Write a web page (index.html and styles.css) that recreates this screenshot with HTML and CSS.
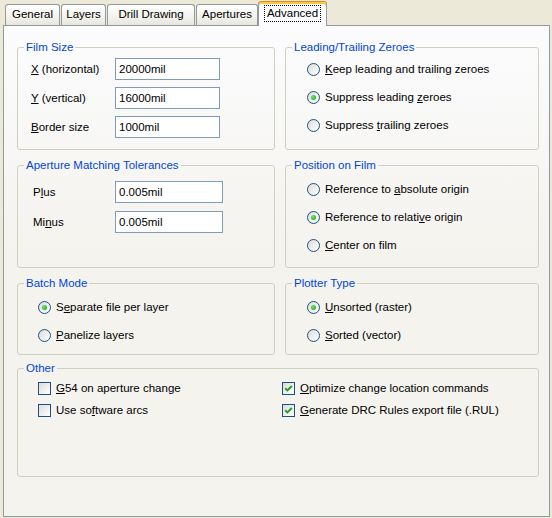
FILE: index.html
```html
<!DOCTYPE html>
<html>
<head>
<meta charset="utf-8">
<title>Advanced</title>
<link rel="stylesheet" href="styles.css">
</head>
<body>
<div class="tabs">
  <div class="tab t-general">General</div>
  <div class="tab t-layers">Layers</div>
  <div class="tab t-drill">Drill Drawing</div>
  <div class="tab t-apert">Apertures</div>
  <div class="tab active t-adv"><span class="focus">Advanced</span></div>
</div>
<div class="panel">
  <fieldset class="group g-r1">
    <legend>Film Size</legend>
    <div class="fields film">
      <label><u>X</u> (horizontal)</label><input class="edit w105" type="text" value="20000mil" readonly>
      <label><u>Y</u> (vertical)</label><input class="edit w105" type="text" value="16000mil" readonly>
      <label><u>B</u>order size</label><input class="edit w105" type="text" value="1000mil" readonly>
    </div>
  </fieldset>
  <fieldset class="group g-r1">
    <legend>Leading/Trailing Zeroes</legend>
    <div class="opts right lead">
      <div class="opt"><span class="radio"></span><span><u>K</u>eep leading and trailing zeroes</span></div>
      <div class="opt"><span class="radio"><span class="dot"></span></span><span>Suppress leading <u>z</u>eroes</span></div>
      <div class="opt"><span class="radio"></span><span>Suppress <u>t</u>railing zeroes</span></div>
    </div>
  </fieldset>
  <fieldset class="group g-r2">
    <legend>Aperture Matching Tolerances</legend>
    <div class="fields aperture">
      <label>P<u>l</u>us</label><input class="edit w108" type="text" value="0.005mil" readonly>
      <label>Mi<u>n</u>us</label><input class="edit w108" type="text" value="0.005mil" readonly>
    </div>
  </fieldset>
  <fieldset class="group g-r2">
    <legend>Position on Film</legend>
    <div class="opts right pos">
      <div class="opt"><span class="radio"></span><span>Reference to <u>a</u>bsolute origin</span></div>
      <div class="opt"><span class="radio"><span class="dot"></span></span><span>Reference to relati<u>v</u>e origin</span></div>
      <div class="opt"><span class="radio"></span><span><u>C</u>enter on film</span></div>
    </div>
  </fieldset>
  <fieldset class="group g-r3">
    <legend>Batch Mode</legend>
    <div class="opts left small">
      <div class="opt"><span class="radio"><span class="dot"></span></span><span>S<u>e</u>parate file per layer</span></div>
      <div class="opt"><span class="radio"></span><span><u>P</u>anelize layers</span></div>
    </div>
  </fieldset>
  <fieldset class="group g-r3">
    <legend>Plotter Type</legend>
    <div class="opts right small">
      <div class="opt"><span class="radio"><span class="dot"></span></span><span><u>U</u>nsorted (raster)</span></div>
      <div class="opt"><span class="radio"></span><span><u>S</u>orted (vector)</span></div>
    </div>
  </fieldset>
  <fieldset class="group g-r4">
    <legend>Other</legend>
    <div class="checks">
      <div class="opt chk"><span class="check"></span><span><u>G</u>54 on aperture change</span></div>
      <div class="opt chk"><span class="check on"><svg width="11" height="11" viewBox="0 0 11 11"><path d="M2.2 5.2 L4.4 7.4 L8.8 3" fill="none" stroke="#21A121" stroke-width="2"/></svg></span><span><u>O</u>ptimize change location commands</span></div>
      <div class="opt chk"><span class="check"></span><span>Use so<u>f</u>tware arcs</span></div>
      <div class="opt chk"><span class="check on"><svg width="11" height="11" viewBox="0 0 11 11"><path d="M2.2 5.2 L4.4 7.4 L8.8 3" fill="none" stroke="#21A121" stroke-width="2"/></svg></span><span><u>G</u>enerate DRC Rules export file (.RUL)</span></div>
    </div>
  </fieldset>
</div>
</body>
</html>
```

FILE: styles.css
```css
html, body {
  margin: 0;
  padding: 0;
}
body {
  background: #ECE9D8;
  font-family: "Liberation Sans", Arial, sans-serif;
  font-size: 11.5px;
  color: #000;
  width: 552px;
  height: 518px;
  overflow: hidden;
}

/* Tabs */
.tabs {
  display: flex;
  align-items: flex-end;
  height: 25px;
  padding-left: 5px;
  gap: 1px;
  position: relative;
  z-index: 2;
}
.tab {
  box-sizing: border-box;
  height: 21px;
  border: 1px solid #919B9C;
  border-bottom: none;
  border-radius: 3px 3px 0 0;
  background: linear-gradient(#FFFFFF, #F3F2EC 60%, #E6E5DE);
  text-align: center;
  line-height: 19px;
  white-space: nowrap;
}
.t-general { width: 55px; }
.t-layers { width: 45px; }
.t-drill { width: 88px; }
.t-apert { width: 62px; }
.tab.active {
  width: 69px;
  height: 25px;
  margin: 0 -2px -1px -1px;
  padding-top: 3px;
  background: #FCFCFE;
  border-top: 1px solid #E68B2C;
  box-shadow: inset 0 2px 0 #FFC73C;
  line-height: 15px;
}
.focus {
  display: inline-block;
  border: 1px dotted #000;
  padding: 0 2px;
  line-height: 15px;
}

/* Panel */
.panel {
  box-sizing: border-box;
  margin-left: 3px;
  width: 547px;
  height: 492px;
  border: 1px solid #919B9C;
  background: linear-gradient(#FCFCFE, #F4F3EE 45%, #F4F3EE);
  padding: 15px 0 0 13px;
  display: grid;
  grid-template-columns: 258px 254px;
  column-gap: 10px;
  row-gap: 9px;
  align-content: start;
}

/* Group boxes */
.group {
  box-sizing: border-box;
  margin: 0;
  padding: 0;
  min-width: 0;
  border: 1px solid #D0D0BF;
  border-radius: 3px;
}
.group legend {
  color: #0046D5;
  line-height: 13px;
  padding: 0 2px;
  margin-left: 6px;
}
.g-r1 { height: 109px; }
.g-r2 { height: 109px; }
.g-r3 { height: 78px; }
.g-r4 {
  grid-column: 1 / -1;
  height: 115px;
  margin-top: -2px;
}

/* Label + edit rows */
.fields {
  display: grid;
  align-items: center;
}
.fields.film {
  padding: 4px 0 0 13px;
  grid-template-columns: 84px 105px;
  row-gap: 7px;
}
.fields.aperture {
  padding: 9px 0 0 15px;
  grid-template-columns: 82px 108px;
  row-gap: 8px;
}
.edit {
  box-sizing: border-box;
  height: 22px;
  margin: 0;
  border: 1px solid #7F9DB9;
  background: #fff;
  padding: 0 3px;
  font: inherit;
  color: #000;
  outline: none;
}
.w105 { width: 105px; }
.w108 { width: 108px; }

/* Radio groups */
.opts {
  display: flex;
  flex-direction: column;
}
.opts.right { padding-left: 21px; }
.opts.left { padding-left: 20px; }
.opts.lead { padding-top: 1px; }
.opts.pos { padding-top: 3px; }
.opts.small { padding-top: 3px; }
.opt {
  display: flex;
  align-items: center;
  height: 28px;
  white-space: nowrap;
}
.radio {
  box-sizing: border-box;
  width: 13px;
  height: 13px;
  flex: none;
  border-radius: 50%;
  border: 1px solid #1C5180;
  background: linear-gradient(135deg, #DCDCD7, #FFFFFF);
  margin-right: 5px;
  display: flex;
  align-items: center;
  justify-content: center;
}
.radio .dot {
  width: 5px;
  height: 5px;
  border-radius: 50%;
  background: radial-gradient(circle at 35% 35%, #6EE06A, #21A121);
}

/* Check boxes */
.checks {
  display: grid;
  grid-template-columns: 244px auto;
  padding: 2px 0 0 20px;
}
.opt.chk { height: 22px; }
.check {
  box-sizing: border-box;
  width: 13px;
  height: 13px;
  flex: none;
  border: 1px solid #1C5180;
  background: linear-gradient(135deg, #DCDCD7, #FFFFFF);
  margin-right: 5px;
  display: flex;
  align-items: center;
  justify-content: center;
}
.check svg { display: block; }
```
